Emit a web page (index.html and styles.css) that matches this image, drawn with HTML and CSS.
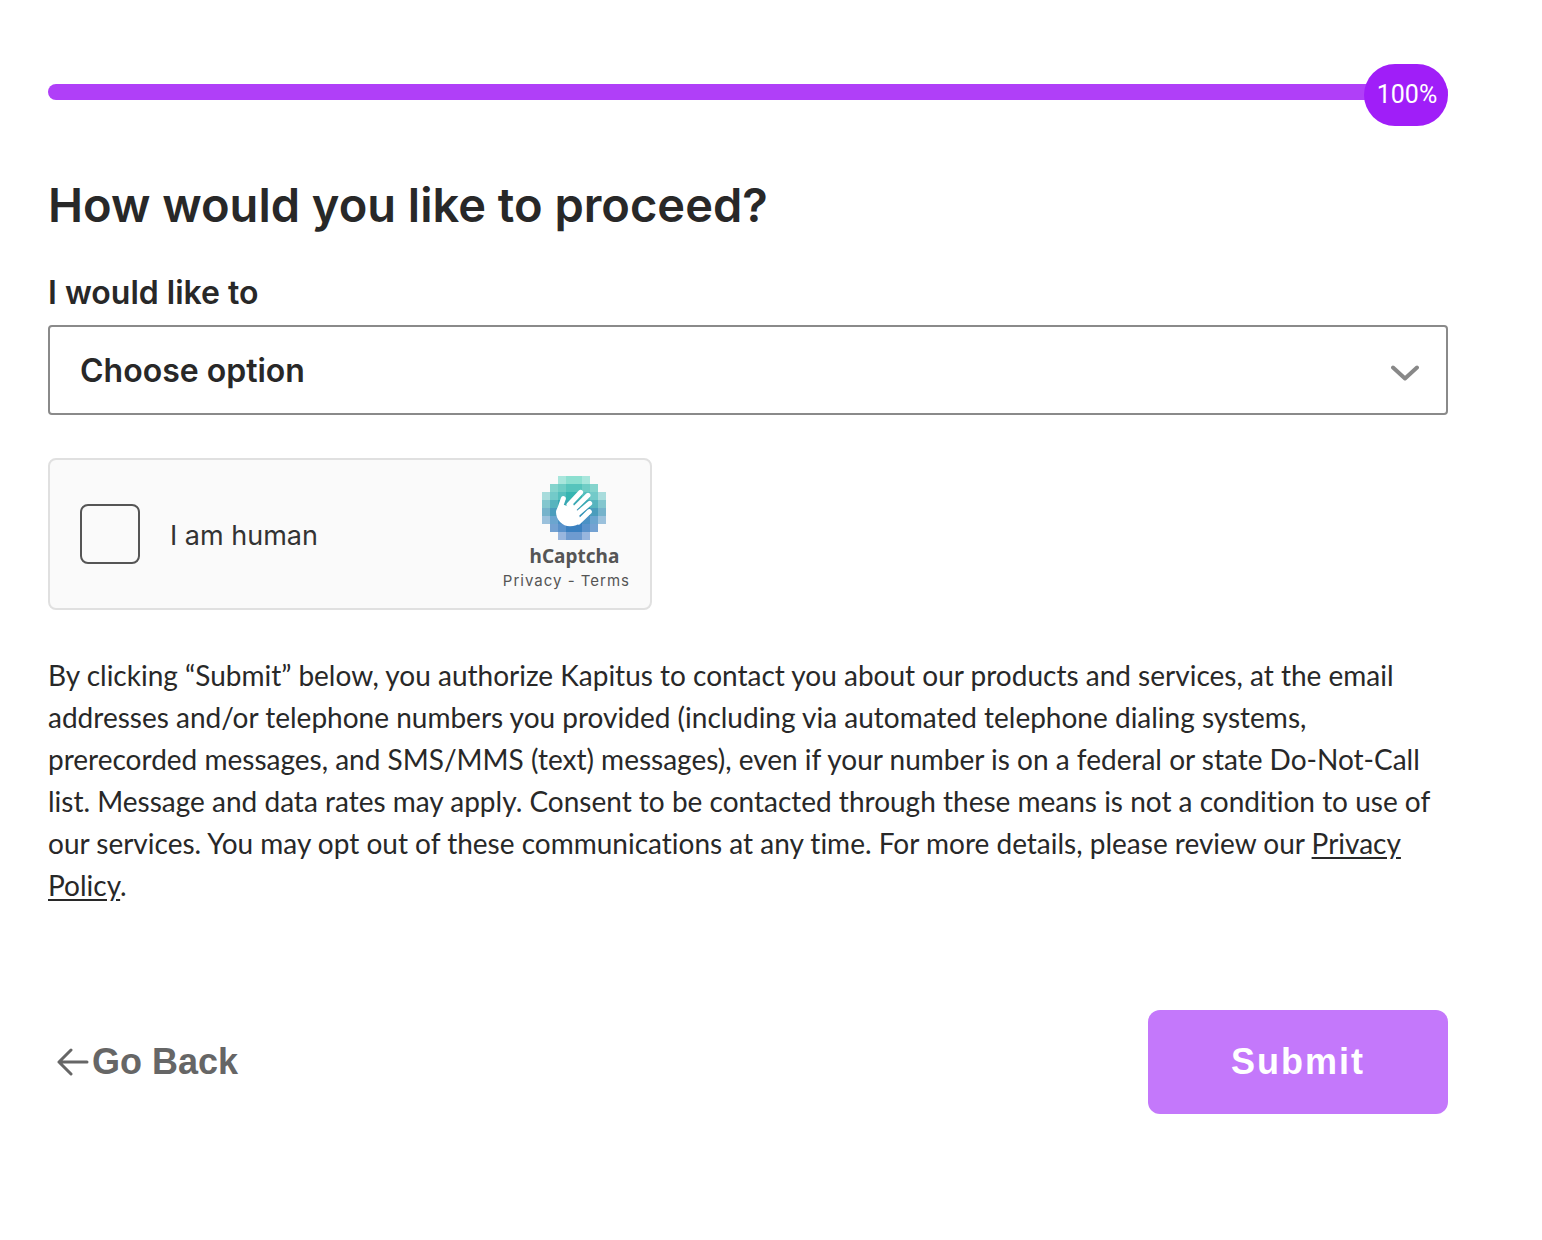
FILE: index.html
```html
<!DOCTYPE html>
<html lang="en">
<head>
  <meta charset="UTF-8" />
  <meta name="viewport" content="width=device-width, initial-scale=1.0" />
  <title>How would you like to proceed?</title>
  <link rel="stylesheet" href="styles.css">
</head>
<body>
  <main class="form-page">
    <div class="progress" role="progressbar" aria-valuenow="100" aria-valuemin="0" aria-valuemax="100" aria-label="Progress">
      <div class="progress-bar"></div>
      <span class="progress-badge">100%</span>
    </div>

    <h1>How would you like to proceed?</h1>

    <form id="proceedForm">
      <label class="field-label" for="option">I would like to</label>
      <div class="select-wrap">
        <select id="option">
          <option>Choose option</option>
        </select>
        <svg class="chevron" viewBox="0 0 28 16" aria-hidden="true"><path d="M2 2.500 14 13.500 26 2.500" /></svg>
      </div>

      <div class="captcha">
        <input type="checkbox" id="human" />
        <label for="human">I am human</label>
        <div class="captcha-brand">
          <div class="captcha-mark">
            <svg class="captcha-logo" viewBox="39 33 192 192" shape-rendering="crispEdges" aria-hidden="true">
              <path fill="#a8e6dc" d="M87 33h96v24H87z" /><path fill="#8cdfd0" d="M111 33h48v24h-48z" />
              <path fill="#85d4cd" d="M63 57h144v24H63z" /><path fill="#6fcdc5" d="M87 57h96v24H87z" /><path fill="#56c4bc" d="M111 57h48v24h-48z" />
              <path fill="#a8dcdc" d="M39 81h192v24H39z" /><path fill="#73cac9" d="M63 81h144v24H63z" /><path fill="#54bfbd" d="M87 81h96v24H87z" /><path fill="#36b5b1" d="M111 81h48v24h-48z" />
              <path fill="#83c6ce" d="M39 105h192v24H39z" /><path fill="#57b4be" d="M63 105h144v24H63z" /><path fill="#38a8b3" d="M87 105h96v24H87z" />
              <path fill="#76b3cb" d="M39 129h192v24H39z" /><path fill="#4b9dbc" d="M63 129h144v24H63z" /><path fill="#2f91b5" d="M87 129h96v24H87z" />
              <path fill="#9bc1dc" d="M39 153h192v24H39z" /><path fill="#6ba5cf" d="M63 153h144v24H63z" /><path fill="#4a91c5" d="M87 153h96v24H87z" /><path fill="#2e82bd" d="M111 153h48v24h-48z" />
              <path fill="#74a2d2" d="M63 177h144v24H63z" /><path fill="#5a92cb" d="M87 177h96v24H87z" /><path fill="#3a80c0" d="M111 177h48v24h-48z" />
              <path fill="#98b6de" d="M87 201h96v24H87z" /><path fill="#6e9bd0" d="M111 201h48v24h-48z" />
              <g class="hand" shape-rendering="auto">
                <path d="M88 140c2-10 7-15 8-24l20 8 16-8 7 14 8 10 4 12 6 18c-9 9-21 14-34 14-23 0-42-20-42-43 0-6 4-11 7-16z" />
                <path class="finger" d="M103 101 91 135M155 82 120 119M177 91 133 134M182 115 141 150M181 140 149 171" />
              </g>
            </svg>
            <strong>hCaptcha</strong>
          </div>
          <span class="captcha-links"><a href="#">Privacy</a> - <a href="#">Terms</a></span>
        </div>
      </div>

      <p class="consent">By clicking “Submit” below, you authorize Kapitus to contact you about our products and services, at the email addresses and/or telephone numbers you provided (including via automated telephone dialing systems, prerecorded messages, and SMS/MMS (text) messages), even if your number is on a federal or state Do-Not-Call list. Message and data rates may apply. Consent to be contacted through these means is not a condition to use of our services. You may opt out of these communications at any time. For more details, please review our <a href="#">Privacy Policy</a>.</p>

      <div class="actions">
        <button type="button" class="back">
          <svg viewBox="0 0 32 28" aria-hidden="true"><path d="M14 2 2 14l12 12M2 14h28" /></svg>Go Back
        </button>
        <button type="submit" class="submit">Submit</button>
      </div>
    </form>
  </main>
</body>
</html>
```

FILE: styles.css
```css
* {
  margin: 0;
  padding: 0;
  box-sizing: border-box;
}

body {
  background: #fff;
  color: #282828;
  font-family: Inter, "Liberation Sans", sans-serif;
}

.form-page {
  padding: 64px 94px 64px 48px;
}

/* Progress */
.progress {
  position: relative;
  padding: 20px 0 26px;
}

.progress-bar {
  height: 16px;
  border-radius: 8px;
  background: #b03ff8;
}

.progress-badge {
  position: absolute;
  top: 0;
  right: 0;
  width: 84px;
  height: 62px;
  padding-left: 2px;
  border-radius: 31px;
  background: #a01ef8;
  color: #fff;
  font-family: Roboto, sans-serif;
  font-size: 25px;
  line-height: 62px;
  text-align: center;
}

h1 {
  margin-top: 49px;
  font-size: 47px;
  font-weight: 600;
  line-height: 60px;
}

.field-label {
  display: block;
  margin-top: 38px;
  font-size: 32px;
  font-weight: 600;
  line-height: 40px;
}

.select-wrap {
  position: relative;
  margin-top: 12px;
}

select {
  display: block;
  width: 100%;
  height: 90px;
  padding: 0 80px 0 30px;
  border: 2px solid #8a8a8a;
  border-radius: 4px;
  background: #fff;
  color: #282828;
  font-family: inherit;
  font-size: 32px;
  font-weight: 600;
  appearance: none;
}

.chevron {
  position: absolute;
  top: 40px;
  right: 29px;
  width: 28px;
  height: 16px;
  pointer-events: none;
}

.chevron path,
.back path {
  fill: none;
  stroke: #888;
  stroke-width: 4;
  stroke-linecap: round;
  stroke-linejoin: round;
}

/* Captcha */
.captcha {
  display: flex;
  align-items: center;
  width: 604px;
  max-width: 100%;
  height: 152px;
  margin-top: 43px;
  padding: 0 20px 0 30px;
  border: 2px solid #e0e0e0;
  border-radius: 8px;
  background: #fafafa;
}

.captcha input {
  width: 60px;
  height: 60px;
  border: 2px solid #555;
  border-radius: 8px;
  background: #fafafa;
  appearance: none;
}

.captcha label {
  padding-top: 2px;
  margin-left: 30px;
  color: #333;
  font-size: 27px;
}

.captcha-brand {
  margin-left: auto;
  color: #555;
}

.captcha-mark {
  display: flex;
  flex-direction: column;
  align-items: center;
  padding: 2px 0 0 16px;
}

.captcha-logo {
  width: 64px;
  height: 64px;
}

.hand {
  fill: #fff;
}

.finger {
  fill: none;
  stroke: #fff;
  stroke-width: 15;
  stroke-linecap: round;
}

.captcha-brand strong {
  margin-top: 4px;
  font-family: "Noto Sans", sans-serif;
  font-size: 19px;
  line-height: 24px;
}

.captcha-links {
  display: block;
  font-size: 15px;
  line-height: 26px;
  letter-spacing: 1px;
}

.captcha-links a {
  color: inherit;
  text-decoration: none;
}

.consent {
  margin-top: 44px;
  font-family: Lato, sans-serif;
  font-size: 28px;
  font-variant-ligatures: none;
  line-height: 42px;
}

.consent a {
  color: inherit;
  text-underline-offset: 3px;
}

/* Buttons */
.actions {
  display: flex;
  justify-content: space-between;
  align-items: center;
  margin-top: 104px;
}

button {
  border: none;
  font-family: Arial, "Liberation Sans", sans-serif;
  font-size: 36px;
  font-weight: bold;
  cursor: pointer;
}

.back {
  display: flex;
  align-items: center;
  gap: 3px;
  padding-left: 9px;
  background: none;
  color: #666;
}

.back svg {
  width: 32px;
  height: 28px;
}

.back path {
  stroke: #666;
  stroke-width: 3;
}

.submit {
  width: 300px;
  height: 104px;
  border-radius: 12px;
  background: #c478fb;
  color: #fff;
  letter-spacing: 2px;
}
```
